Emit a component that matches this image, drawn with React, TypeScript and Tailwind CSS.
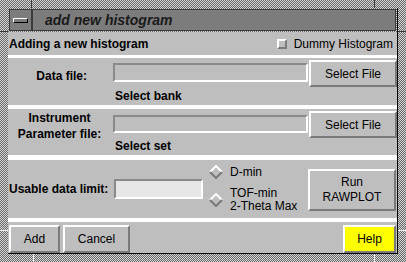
import React from 'react';

const dither = "bg-[image:repeating-conic-gradient(#6a6a6a_0%_25%,#d4d4d4_0%_50%)] bg-[length:2px_2px]";

function Raised({ className = '', children }: { className?: string; children?: React.ReactNode }) {
  return (
    <div
      className={
        "flex items-center justify-center border-2 border-t-white border-l-white border-b-[#7a7a7a] border-r-[#7a7a7a] text-[12px] text-black " +
        className
      }
    >
      {children}
    </div>
  );
}

function Entry({ className = '' }: { className?: string }) {
  return (
    <div
      className={
        "border-2 border-t-[#8a8a8a] border-l-[#8a8a8a] border-b-white border-r-white " + className
      }
    />
  );
}

function Diamond() {
  return (
    <svg width="14" height="14" viewBox="0 0 14 14" className="shrink-0">
      <polygon points="7,1 13,7 7,13 1,7" fill="#bebebe" />
      <polyline points="1,7 7,1 13,7" fill="none" stroke="#ffffff" strokeWidth="2" />
      <polyline points="1,7 7,13 13,7" fill="none" stroke="#7a7a7a" strokeWidth="2" />
    </svg>
  );
}

export default function App() {
  return (
    <div
      className={"relative w-[406px] h-[262px] flex flex-col pt-[8px] pl-[8px] pr-[8px] pb-[9px] " + dither}
      style={{ fontFamily: '"Liberation Sans", Arial, sans-serif' }}
    >
      {/* frame resize marks */}
      <div className="absolute left-[31px] top-0 w-px h-[8px] bg-[#3a3a3a]" />
      <div className="absolute left-[374px] top-0 w-px h-[8px] bg-[#3a3a3a]" />
      <div className="absolute left-[33px] bottom-0 w-px h-[8px] bg-[#f0f0f0]" />
      <div className="absolute left-[374px] bottom-0 w-px h-[8px] bg-[#f0f0f0]" />
      <div className="absolute left-0 top-[31px] w-[8px] h-px bg-[#3a3a3a]" />
      <div className="absolute right-0 top-[31px] w-[8px] h-px bg-[#3a3a3a]" />
      <div className="absolute left-0 top-[230px] w-[8px] h-px bg-[#f0f0f0]" />
      <div className="absolute right-0 top-[230px] w-[8px] h-px bg-[#f0f0f0]" />

      <div className="flex flex-col flex-1 border-r border-b border-black">
        {/* title bar */}
        <div className={"h-[24px] flex p-px " + dither}>
          <div className="w-[23px] h-full bg-[#7c7c7c] border border-[#3a3a3a] flex items-center justify-center">
            <div className="w-[15px] h-[5px] bg-[#7c7c7c] border border-black border-t-white border-l-white" />
          </div>
          <div className="flex-1 h-full bg-[#7c7c7c] border border-[#3a3a3a] flex items-center pl-[12px]">
            <span className="text-[14px] font-bold italic text-[#1a1a1a] leading-none">add new histogram</span>
          </div>
        </div>

        <div className="flex flex-col flex-1 bg-white">
          {/* header */}
          <div className="h-[23px] bg-[#bebebe] flex items-center pl-[1px] pr-[4px]">
            <span className="text-[12px] font-bold text-black">Adding a new histogram</span>
            <div className="ml-auto flex items-center gap-[7px]">
              <div className="w-[10px] h-[10px] border-2 border-t-white border-l-white border-b-[#7a7a7a] border-r-[#7a7a7a] bg-[#bebebe]" />
              <span className="text-[12px] text-black">Dummy Histogram</span>
            </div>
          </div>

          {/* data file */}
          <div className="mt-[3px] h-[47px] bg-[#bebebe] flex">
            <div className="w-[105px] flex justify-end pt-[9px] pr-[26px]">
              <span className="text-[12px] font-bold text-black">Data file:</span>
            </div>
            <div className="flex flex-col pt-[5px]">
              <Entry className="w-[195px] h-[21px]" />
              <span className="text-[12px] font-bold text-black mt-[5px] ml-[2px]">Select bank</span>
            </div>
            <Raised className="ml-[1px] mt-[2px] w-[88px] h-[27px]">Select File</Raised>
          </div>

          {/* instrument parameter */}
          <div className="mt-[4px] h-[46px] bg-[#bebebe] flex">
            <div className="w-[105px] flex flex-col items-center pt-[1px] pr-[2px] leading-[16px]">
              <span className="text-[12px] font-bold text-black">Instrument</span>
              <span className="text-[12px] font-bold text-black">Parameter file:</span>
            </div>
            <div className="flex flex-col pt-[6px]">
              <Entry className="w-[195px] h-[20px]" />
              <span className="text-[12px] font-bold text-black mt-[4px] ml-[2px]">Select set</span>
            </div>
            <Raised className="ml-[1px] mt-[2px] w-[88px] h-[27px]">Select File</Raised>
          </div>

          {/* usable data limit */}
          <div className="mt-[5px] h-[58px] bg-[#bebebe] flex items-center">
            <span className="text-[12px] font-bold text-black pl-[1px] w-[106px]">Usable data limit:</span>
            <div className="w-[89px] h-[20px] bg-[#e6e6e6] border-2 border-t-[#8a8a8a] border-l-[#8a8a8a] border-b-white border-r-white" />
            <div className="flex flex-col ml-[6px] w-[99px] self-start pt-[4px]">
              <div className="flex items-center gap-[7px] h-[16px]">
                <Diamond />
                <span className="text-[12px] text-black">D-min</span>
              </div>
              <div className="flex items-center gap-[7px] mt-[7px]">
                <Diamond />
                <span className="text-[12px] text-black leading-[13px]">
                  TOF-min
                  <br />
                  2-Theta Max
                </span>
              </div>
            </div>
            <Raised className="w-[88px] h-[42px] self-start mt-[9px] leading-[15px] text-center">
              Run
              <br />
              RAWPLOT
            </Raised>
          </div>

          {/* buttons */}
          <div className="mt-[4px] flex-1 bg-[#bebebe] flex items-start pt-[3px] pl-[1px] pr-[1px]">
            <Raised className="w-[51px] h-[28px]">Add</Raised>
            <Raised className="ml-[3px] w-[67px] h-[28px]">Cancel</Raised>
            <Raised className="ml-auto w-[53px] h-[28px] bg-[#ffff00]">Help</Raised>
          </div>
        </div>
      </div>
    </div>
  );
}
